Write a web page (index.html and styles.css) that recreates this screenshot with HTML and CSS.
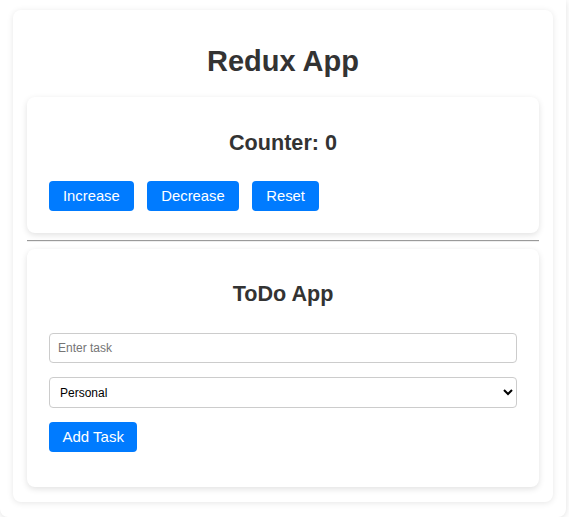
FILE: index.html
```html
<!DOCTYPE html>
<html>
<head>
<meta charset="utf-8">
<link rel="stylesheet" href="styles.css">
</head>
<body>
<div class="page">
  <div class="app">
    <h1 class="title">Redux App</h1>
    <div class="card counter">
      <h2 class="card-title">Counter: 0</h2>
      <div class="btn-row">
        <button class="btn">Increase</button>
        <button class="btn">Decrease</button>
        <button class="btn">Reset</button>
      </div>
    </div>
    <hr class="divider">
    <div class="card todo">
      <h2 class="card-title">ToDo App</h2>
      <input class="field" type="text" placeholder="Enter task">
      <select class="field select">
        <option>Personal</option>
        <option>Work</option>
      </select>
      <button class="btn add">Add Task</button>
    </div>
  </div>
</div>
</body>
</html>
```

FILE: styles.css
```css
html, body {
  margin: 0;
  padding: 0;
  background: #ffffff;
}
body {
  font-family: "Liberation Sans", Arial, sans-serif;
  color: #333;
}
.page {
  width: 540px;
  padding: 10px 13px 15px 13px;
  background: #fff;
  border-radius: 0 0 8px 8px;
  box-shadow: 0 1px 6px rgba(0, 0, 0, 0.12);
}
.app {
  background: #fff;
  border-radius: 8px;
  padding: 14px 14px 15px 14px;
  box-shadow: 0 1px 6px rgba(0, 0, 0, 0.1);
}
.title {
  margin: 21px 0 19px;
  text-align: center;
  font-size: 29px;
  line-height: 33px;
  font-weight: bold;
  color: #333;
}
.card {
  background: #fff;
  border-radius: 8px;
  padding: 22px;
  box-shadow: 0 2px 6px rgba(0, 0, 0, 0.12);
}
.card-title {
  margin: 11px 0 26px;
  text-align: center;
  font-size: 21.6px;
  line-height: 25px;
  font-weight: bold;
  color: #333;
}
.btn-row {
  display: flex;
  gap: 13.6px;
}
.btn {
  font-family: "Liberation Sans", Arial, sans-serif;
  font-size: 14.8px;
  line-height: 18px;
  padding: 6px 14px;
  background: #007bff;
  color: #fff;
  border: none;
  border-radius: 4px;
  cursor: pointer;
}
.divider {
  margin: 7px 0 7px;
  border: none;
  border-top: 1px solid #9a9a9a;
  border-bottom: 1px solid #eeeeee;
}
.todo .card-title {
  margin: 10px 0 27px;
}
.field {
  display: block;
  box-sizing: border-box;
  width: 100%;
  height: 30px;
  margin: 0 0 14px;
  padding: 0 8px;
  font-family: "Liberation Sans", Arial, sans-serif;
  font-size: 12px;
  color: #000;
  background: #fff;
  border: 1px solid #cccccc;
  border-radius: 4px;
}
.field::placeholder {
  color: #757575;
}
.select {
  height: 31px;
  padding: 0 6px;
}
.add {
  display: block;
  padding: 6px 13.5px;
  font-size: 15px;
  margin-bottom: 13px;
}
```
